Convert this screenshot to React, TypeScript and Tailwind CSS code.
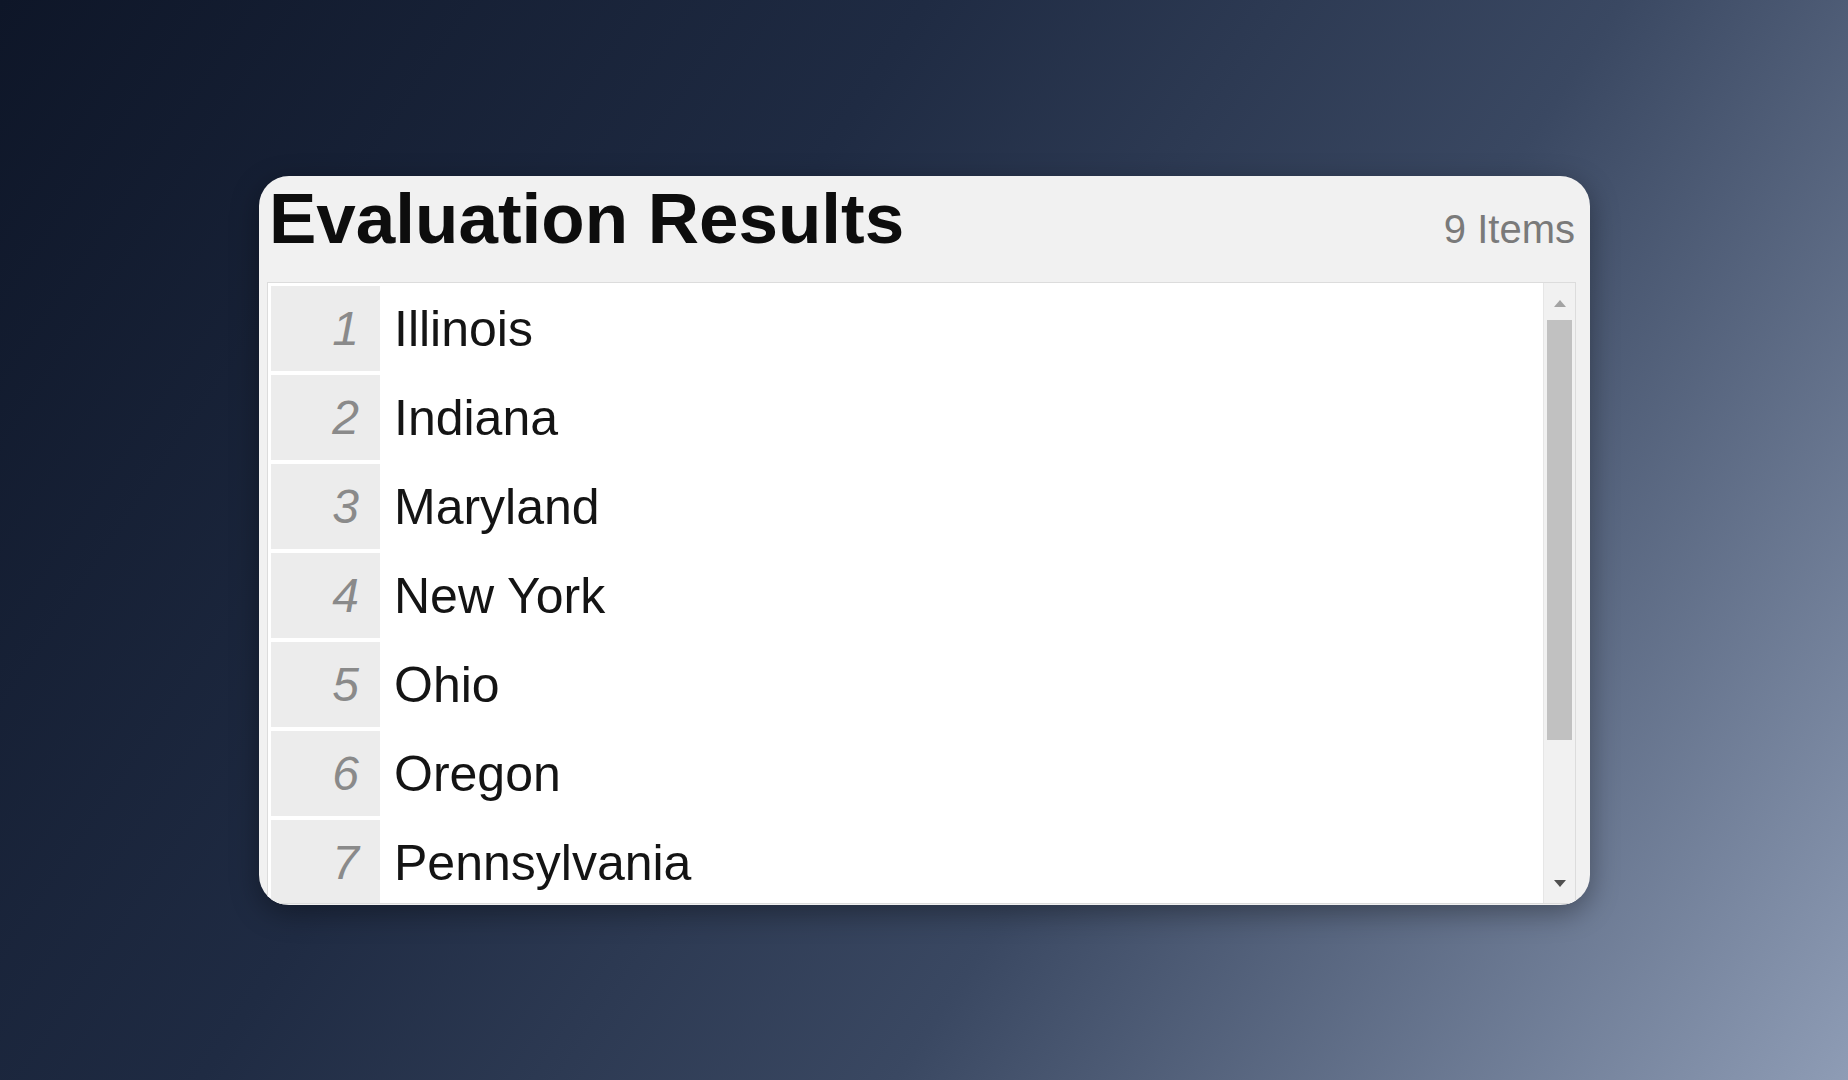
const states = ['Illinois', 'Indiana', 'Maryland', 'New York', 'Ohio', 'Oregon', 'Pennsylvania'];

export default function App() {
  return (
    <div
      className="w-[1848px] h-[1080px] overflow-hidden pt-[176px] pl-[259px] bg-[linear-gradient(124deg,#0e1628_0%,#1f2b43_36%,#3a4862_63%,#8e9cb5_100%)]"
      style={{ fontFamily: '"Liberation Sans", Arial, sans-serif' }}
    >
      <div className="w-[1331px] h-[729px] rounded-[30px] overflow-hidden bg-[#f1f1f1] flex flex-col shadow-[0_8px_28px_rgba(0,0,0,0.35)]">
        {/* header */}
        <div className="h-[106px] shrink-0 flex items-baseline justify-between pl-[10px] pr-[15px] pt-[7px]">
          <h1 className="text-[71px] leading-none font-bold text-[#0d0d0d]">Evaluation Results</h1>
          <span className="text-[40px] leading-none text-[#7a7a7a]">9 Items</span>
        </div>

        {/* list */}
        <div className="flex-1 min-h-0 ml-[8px] mr-[14px] mb-[1px] border border-[#dcdcdc] bg-white flex overflow-hidden">
          <div className="flex-1 pt-[3px] pl-[3px] flex flex-col">
            {states.map((name, i) => (
              <div key={name} className="flex h-[89px] shrink-0">
                <div className="w-[109px] h-[85px] bg-[#ececec] flex items-center justify-end pr-[21px]">
                  <span className="text-[48px] italic text-[#8a8a8a] leading-none">{i + 1}</span>
                </div>
                <div className="flex-1 h-[85px] flex items-center pl-[14px]">
                  <span className="text-[50px] text-[#141414] leading-none">{name}</span>
                </div>
              </div>
            ))}
          </div>

          {/* scrollbar */}
          <div className="w-[32px] shrink-0 bg-[#f1f1f1] border-l border-[#e6e6e6] flex flex-col items-center pt-[17px] pb-[16px]">
            <div className="w-0 h-0 border-l-[6px] border-r-[6px] border-b-[7px] border-l-transparent border-r-transparent border-b-[#a3a3a3]" />
            <div className="mt-[13px] w-[25px] h-[420px] bg-[#c1c1c1]" />
            <div className="flex-1" />
            <div className="w-0 h-0 border-l-[6px] border-r-[6px] border-t-[7px] border-l-transparent border-r-transparent border-t-[#505050]" />
          </div>
        </div>
      </div>
    </div>
  );
}
